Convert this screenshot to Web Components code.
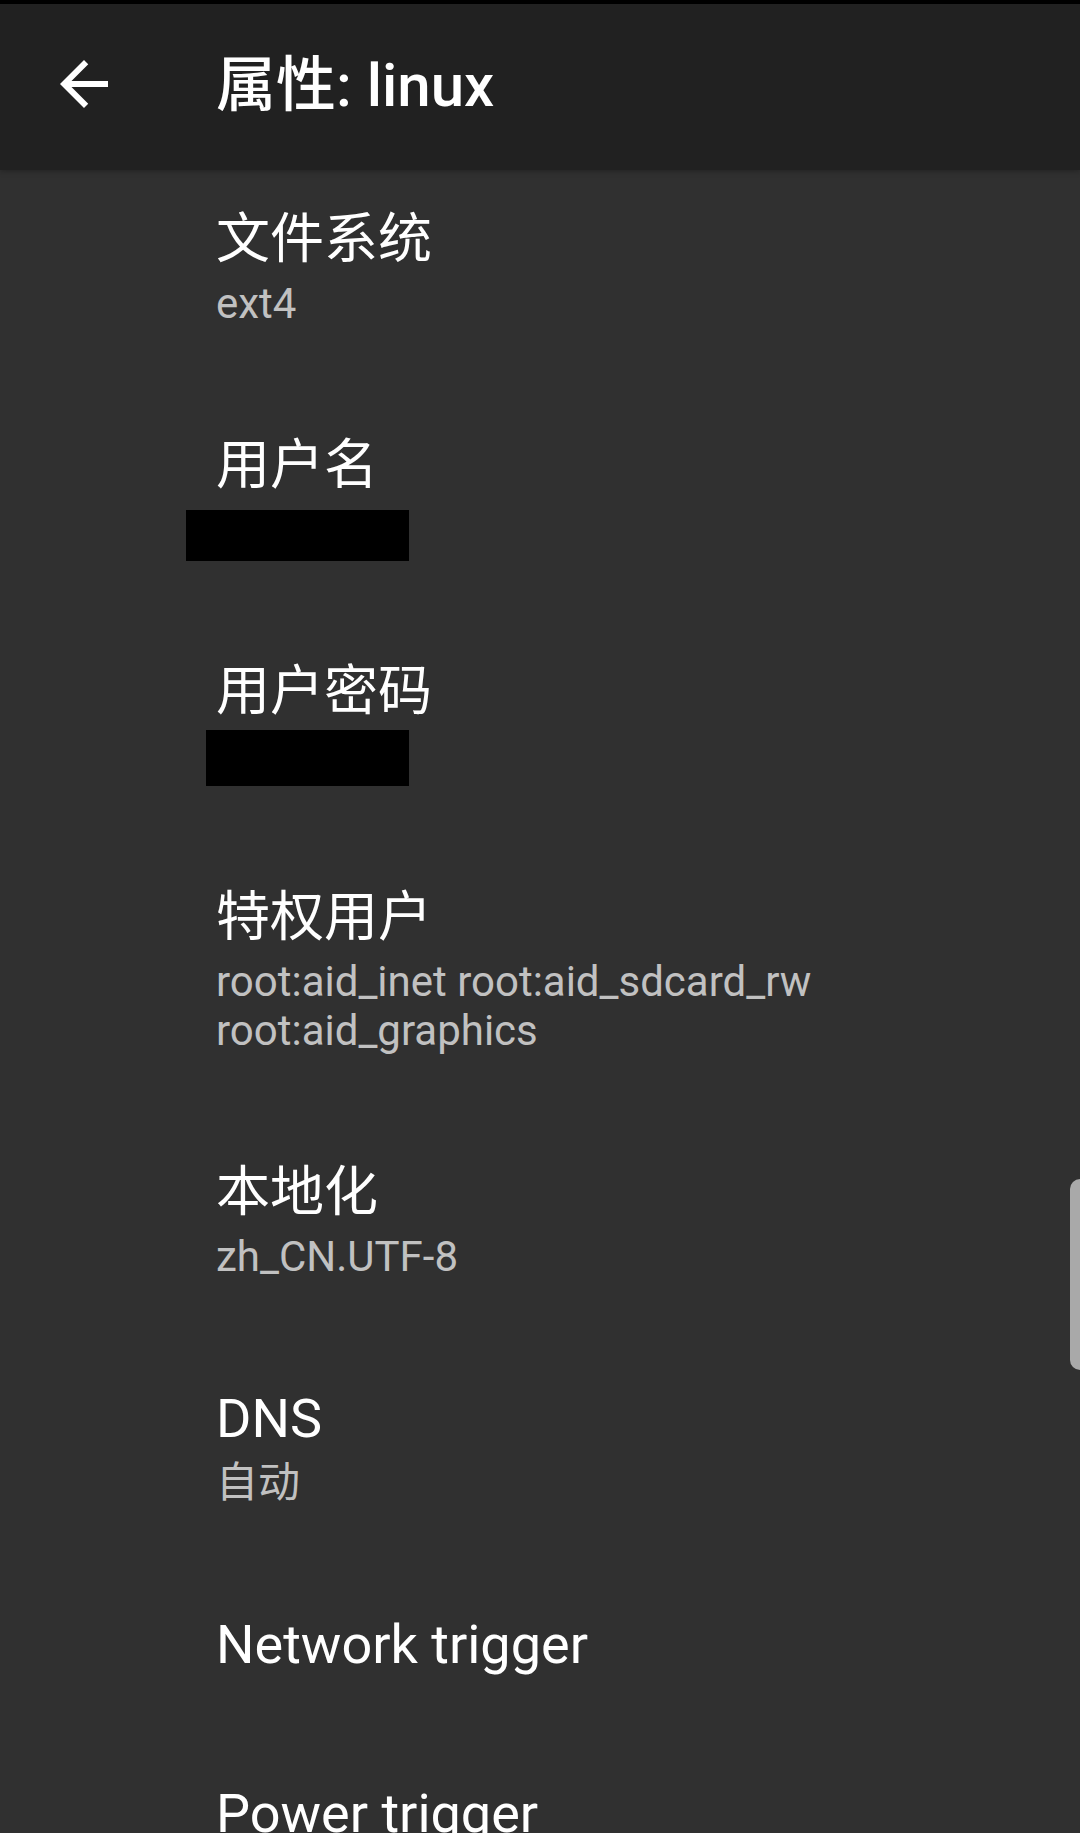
<!DOCTYPE html>
<html lang="zh-CN">
<head>
<meta charset="utf-8">
<meta name="viewport" content="width=device-width, initial-scale=1">
<title>属性: linux</title>
<style>
  html, body { margin: 0; height: 100%; background: #303030; }
  body { font-family: Roboto, "Noto Sans CJK SC", sans-serif; color: #fff; }
</style>
</head>
<body>
<settings-screen>
  <app-bar slot="bar">属性: linux</app-bar>
  <pref-item label="文件系统">ext4</pref-item>
  <pref-item label="用户名"><redacted-value></redacted-value></pref-item>
  <pref-item label="用户密码"><redacted-value kind="password"></redacted-value></pref-item>
  <pref-item label="特权用户">root:aid_inet root:aid_sdcard_rw root:aid_graphics</pref-item>
  <pref-item label="本地化">zh_CN.UTF-8</pref-item>
  <pref-item label="DNS">自动</pref-item>
  <pref-item label="Network trigger"></pref-item>
  <pref-item label="Power trigger"></pref-item>
</settings-screen>
<script>
  class SettingsScreen extends HTMLElement {
    constructor() {
      super();
      this.attachShadow({ mode: "open" }).innerHTML = `
        <style>
          :host { display: flex; flex-direction: column; height: 100vh; overflow: hidden; background: #303030; }
          main { flex: 1; min-height: 0; overflow: hidden; display: flex; flex-direction: column; gap: 105px; padding: 38px 48px 0 216px; }
          .thumb { position: fixed; right: 0; top: 1179px; width: 10px; height: 191px; border-radius: 10px 0 0 10px; background: #a9a9a9; }
        </style>
        <slot name="bar"></slot>
        <main><slot></slot></main>
        <div class="thumb"></div>`;
    }
  }

  class AppBar extends HTMLElement {
    constructor() {
      super();
      this.attachShadow({ mode: "open" }).innerHTML = `
        <style>
          :host { display: block; flex: none; border-top: 4px solid #000; background: #212121; box-shadow: 0 1px 6px rgba(0, 0, 0, .3); }
          header { display: flex; align-items: center; height: 160px; padding: 0 48px 6px; }
          button { display: block; flex: none; width: 72px; height: 72px; margin-right: 96px; padding: 0; border: 0; background: none; color: inherit; }
          svg { display: block; width: 72px; height: 72px; }
          h1 { margin: 0; padding-top: 4px; font-size: 60px; line-height: 72px; font-weight: 500; }
        </style>
        <header>
          <button aria-label="返回"><svg viewBox="0 0 24 24" fill="currentColor"><path d="M20 11H7.830l5.590-5.590L12 4l-8 8 8 8 1.410-1.410L7.830 13H20v-2z"/></svg></button>
          <h1><slot></slot></h1>
        </header>`;
    }
  }

  class PrefItem extends HTMLElement {
    connectedCallback() {
      const root = this.attachShadow({ mode: "open" });
      root.innerHTML = `
        <style>
          :host { display: block; flex: none; }
          button { display: flex; flex-direction: column; gap: 7px; width: 100%; padding: 0; border: 0; background: none; color: inherit; font: inherit; text-align: left; }
          .label { font-size: 54px; line-height: 64px; }
          .summary { padding-bottom: 1px; font-size: 42px; line-height: 49px; color: #c1c1c1; }
        </style>
        <button><span class="label"></span></button>`;
      root.querySelector(".label").textContent = this.getAttribute("label");
      if (this.childNodes.length) {
        const summary = document.createElement("span");
        summary.className = "summary";
        summary.append(document.createElement("slot"));
        root.querySelector("button").append(summary);
      }
    }
  }

  class RedactedValue extends HTMLElement {
    constructor() {
      super();
      this.attachShadow({ mode: "open" }).innerHTML = `
        <style>
          :host { display: block; position: relative; height: 49px; }
          .bar { position: absolute; left: -30px; top: 5px; width: 223px; height: 51px; background: #000; }
          :host([kind="password"]) .bar { left: -10px; top: -1px; width: 203px; height: 56px; }
        </style>
        <div class="bar"></div>`;
    }
  }

  customElements.define("settings-screen", SettingsScreen);
  customElements.define("app-bar", AppBar);
  customElements.define("redacted-value", RedactedValue);
  customElements.define("pref-item", PrefItem);
</script>
</body>
</html>
